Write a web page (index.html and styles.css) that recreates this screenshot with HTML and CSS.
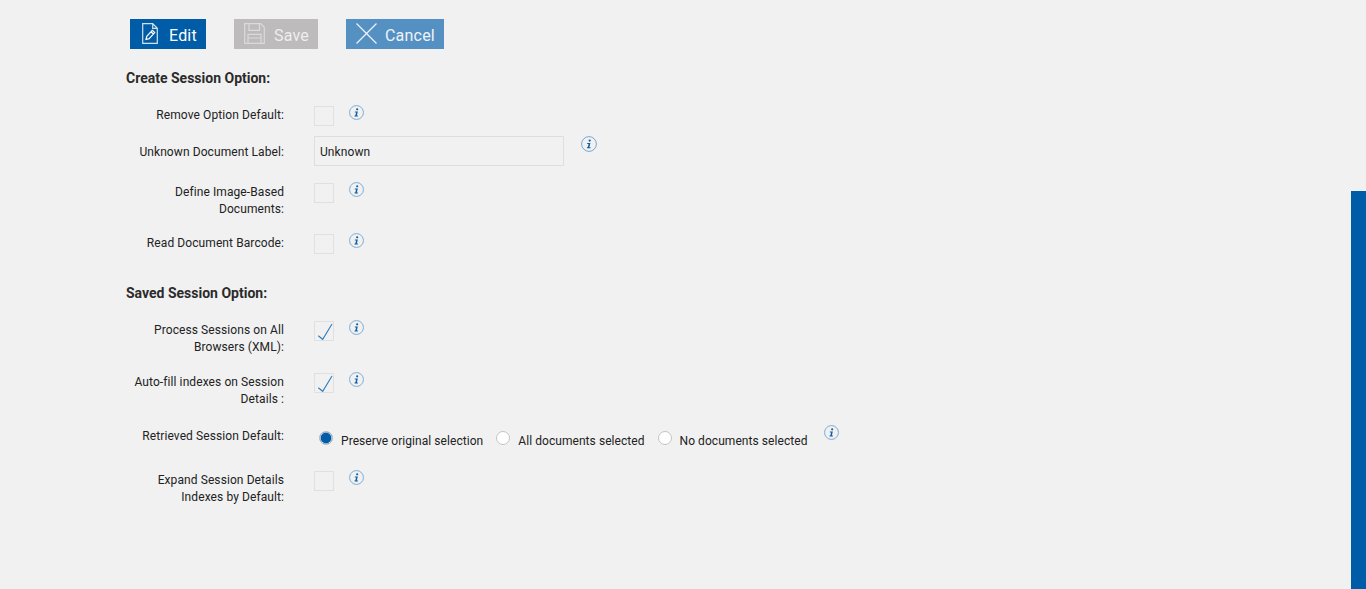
FILE: index.html
```html
<!DOCTYPE html>
<html lang="en">
<head>
<meta charset="utf-8">
<title>Session Options</title>
<link rel="stylesheet" href="styles.css">
</head>
<body>
<svg class="sprite" width="0" height="0" aria-hidden="true">
  <symbol id="info" viewBox="0 0 16 16">
    <circle cx="8" cy="8" r="7.4" fill="none" stroke="#74a8d2" stroke-width="1"/>
    <circle cx="8.7" cy="4.6" r="1.15" fill="#0f5fa5"/>
    <path d="M6.2 7h3.2l-1 4.3h1.1v.9H5.9v-.9h.8l.9-3.4H6.2z" fill="#0f5fa5"/>
  </symbol>
  <symbol id="check" viewBox="0 0 20 20">
    <path d="M4.3 14.700 8.700 18.300 18 3" fill="none" stroke="#2f7fc0" stroke-width="1.1"/>
  </symbol>
</svg>
<main class="page">
  <div class="toolbar">
    <button class="btn btn-edit" type="button">
      <svg class="btn-icon btn-icon-doc" viewBox="0 0 16 21" aria-hidden="true">
        <path d="M.7.7h10l4.6 4.6v15H.7z M10.7.7v4.6h4.6" fill="none" stroke="#cfe2f2" stroke-width="1.2"/>
        <path d="M4 16.500l.8-3.200 5.500-6 2.400 2.300-5.500 6z M9 8.700l2.400 2.300" fill="none" stroke="#fff" stroke-width="1.2"/>
      </svg>
      <span>Edit</span>
    </button>
    <button class="btn btn-save" type="button">
      <svg class="btn-icon btn-icon-disk" viewBox="0 0 21 21" aria-hidden="true">
        <path d="M.7.7h16l3.600 3.600v16H.7z M5 .7v6.600h10.500V.7 M4 20.300v-9h13v9 M4 15h13" fill="none" stroke="#dcdada" stroke-width="1.2"/>
      </svg>
      <span>Save</span>
    </button>
    <button class="btn btn-cancel" type="button">
      <svg class="btn-icon btn-icon-x" viewBox="0 0 21 21" aria-hidden="true">
        <path d="M.5.5l20 20M20.500.5l-20 20" fill="none" stroke="#edf3f8" stroke-width="1.2"/>
      </svg>
      <span>Cancel</span>
    </button>
  </div>

  <h2 class="heading heading-first">Create Session Option:</h2>
  <div class="row row-r1">
    <label class="label label-one">Remove Option Default:</label>
    <span class="check"></span>
    <svg class="info"><use href="#info"/></svg>
  </div>
  <div class="row row-r2">
    <label class="label label-input">Unknown Document Label:</label>
    <input class="text" type="text" value="Unknown" readonly>
    <svg class="info info-input"><use href="#info"/></svg>
  </div>
  <div class="row row-r3">
    <label class="label label-one">Define Image-Based Documents:</label>
    <span class="check"></span>
    <svg class="info"><use href="#info"/></svg>
  </div>
  <div class="row row-r4">
    <label class="label label-one">Read Document Barcode:</label>
    <span class="check"></span>
    <svg class="info"><use href="#info"/></svg>
  </div>

  <h2 class="heading heading-second">Saved Session Option:</h2>
  <div class="row row-r5">
    <label class="label label-one">Process Sessions on All Browsers (XML):</label>
    <span class="check"><svg class="tick"><use href="#check"/></svg></span>
    <svg class="info"><use href="#info"/></svg>
  </div>
  <div class="row row-r6">
    <label class="label label-one">Auto-fill indexes on Session Details :</label>
    <span class="check"><svg class="tick"><use href="#check"/></svg></span>
    <svg class="info"><use href="#info"/></svg>
  </div>
  <div class="row row-r7">
    <label class="label label-one">Retrieved Session Default:</label>
    <div class="radios">
      <span class="radio-item"><span class="radio radio-on"></span>Preserve original selection</span>
      <span class="radio-item"><span class="radio"></span>All documents selected</span>
      <span class="radio-item"><span class="radio"></span>No documents selected</span>
    </div>
    <svg class="info info-radios"><use href="#info"/></svg>
  </div>
  <div class="row row-r8">
    <label class="label label-one">Expand Session Details Indexes by Default:</label>
    <span class="check"></span>
    <svg class="info"><use href="#info"/></svg>
  </div>
</main>
<div class="scroll-thumb"></div>
</body>
</html>
```

FILE: styles.css
```css
* { box-sizing: border-box; }
html, body { margin: 0; height: 100%; }
body {
  background: #f1f1f1;
  color: #222;
  font-family: Roboto, "Liberation Sans", sans-serif;
  font-size: 12px;
  letter-spacing: .09px;
  overflow: hidden;
}
.sprite { position: absolute; }
.page { padding: 19px 0 0 126px; }

.toolbar { display: flex; gap: 28px; margin-left: 4px; }
.btn {
  display: flex;
  align-items: center;
  height: 30px;
  border: 0;
  padding: 0;
  color: #fff;
  font: 400 16px/30px Roboto, sans-serif;
  letter-spacing: .2px;
}
.btn span { position: relative; top: 2px; }
.btn-edit { width: 76px; background: #005ca6; padding-left: 12px; gap: 11px; }
.btn-save { width: 84px; background: #bdbbbb; padding-left: 10px; gap: 9px; color: #efeeee; }
.btn-cancel { width: 98px; background: #5590c2; padding-left: 10px; gap: 8px; color: #edf3f8; }
.btn-icon { flex: none; height: 21px; position: relative; top: -1px; }
.btn-icon-doc { width: 16px; }
.btn-icon-disk { width: 21px; }
.btn-icon-x { width: 21px; }

.heading { margin: 0; font-size: 14px; font-weight: 700; line-height: 18px; letter-spacing: 0; color: #2b2b2b; }
.heading-first { margin-top: 20px; }
.heading-second { margin-top: 30px; }

.row { display: flex; align-items: flex-start; }
.row-r1 { margin-top: 19px; }
.row-r2 { margin-top: 10px; }
.row-r3 { margin-top: 17px; }
.row-r4 { margin-top: 16px; }
.row-r5 { margin-top: 19px; }
.row-r6 { margin-top: 17px; }
.row-r7 { margin-top: 19px; }
.row-r8 { margin-top: 21px; }

.label {
  width: 158px;
  flex: none;
  margin-right: 30px;
  text-align: right;
  line-height: 17px;
  color: #222;
}
.label-one { padding-top: 1px; }
.label-input { padding-top: 8px; }

.check {
  width: 20px;
  height: 20px;
  flex: none;
  border: 1px solid #e0e0e0;
  display: block;
}
.tick { display: block; width: 20px; height: 20px; margin: -1px; }

.info { width: 15px; height: 15px; flex: none; margin: -1px 0 0 15px; }
.info-input { margin: 0 0 0 17px; width: 16px; height: 16px; }
.info-radios { margin: -2px 0 0 17px; }

.text {
  width: 250px;
  height: 30px;
  border: 1px solid #dedede;
  background: #f1f1f1;
  padding: 1px 5px 0;
  color: #222;
  font: 12px Roboto, sans-serif;
  letter-spacing: .09px;
}

.radios { display: flex; gap: 13px; margin-left: 5px; letter-spacing: .06px; }
.radio-item { display: flex; align-items: flex-start; gap: 8px; line-height: 17px; padding-top: 6px; }
.radio {
  width: 14px;
  height: 14px;
  margin-top: -2px;
  flex: none;
  border: 1px solid #c4c4c4;
  border-radius: 50%;
  background: #fff;
}
.radio-on { background: #005ca6; box-shadow: inset 0 0 0 .6px #f1f1f1; }

.scroll-thumb {
  position: fixed;
  right: 0;
  top: 191px;
  bottom: 0;
  width: 15px;
  background: #005ca6;
}
```
